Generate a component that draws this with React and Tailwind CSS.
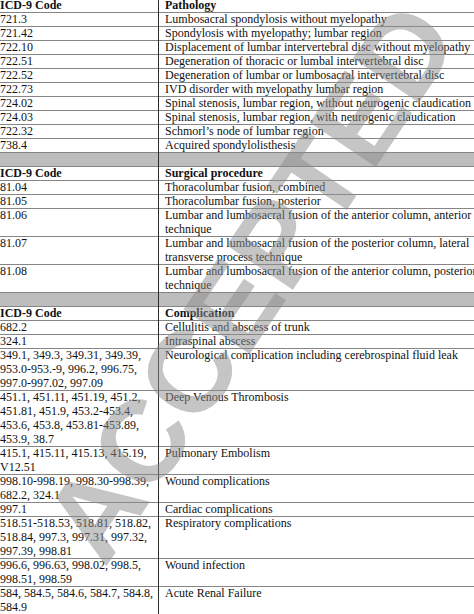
const sections = [
  {
    title: 'Pathology',
    rows: [
      [['721.3'], ['Lumbosacral spondylosis without myelopathy']],
      [['721.42'], ['Spondylosis with myelopathy; lumbar region']],
      [['722.10'], ['Displacement of lumbar intervertebral disc without myelopathy']],
      [['722.51'], ['Degeneration of thoracic or lumbal intervertebral disc']],
      [['722.52'], ['Degeneration of lumbar or lumbosacral intervertebral disc']],
      [['722.73'], ['IVD disorder with myelopathy lumbar region']],
      [['724.02'], ['Spinal stenosis, lumbar region, without neurogenic claudication']],
      [['724.03'], ['Spinal stenosis, lumbar region, with neurogenic claudication']],
      [['722.32'], ['Schmorl\u2019s node of lumbar region']],
      [['738.4'], ['Acquired spondylolisthesis']],
    ],
  },
  {
    title: 'Surgical procedure',
    rows: [
      [['81.04'], ['Thoracolumbar fusion, combined']],
      [['81.05'], ['Thoracolumbar fusion, posterior']],
      [['81.06'], ['Lumbar and lumbosacral fusion of the anterior column, anterior', 'technique']],
      [['81.07'], ['Lumbar and lumbosacral fusion of the posterior column, lateral', 'transverse process technique']],
      [['81.08'], ['Lumbar and lumbosacral fusion of the anterior column, posterior', 'technique']],
    ],
  },
  {
    title: 'Complication',
    rows: [
      [['682.2'], ['Cellulitis and abscess of trunk']],
      [['324.1'], ['Intraspinal abscess']],
      [
        ['349.1, 349.3, 349.31, 349.39,', '953.0-953.-9, 996.2, 996.75,', '997.0-997.02, 997.09'],
        ['Neurological complication including cerebrospinal fluid leak'],
      ],
      [
        ['451.1, 451.11, 451.19, 451.2,', '451.81, 451.9, 453.2-453.4,', '453.6, 453.8, 453.81-453.89,', '453.9, 38.7'],
        ['Deep Venous Thrombosis'],
      ],
      [['415.1, 415.11, 415.13, 415.19,', 'V12.51'], ['Pulmonary Embolism']],
      [['998.10-998.19, 998.30-998.39,', '682.2, 324.1'], ['Wound complications']],
      [['997.1'], ['Cardiac complications']],
      [
        ['518.51-518.53, 518.81, 518.82,', '518.84, 997.3, 997.31, 997.32,', '997.39, 998.81'],
        ['Respiratory complications'],
      ],
      [['996.6, 996.63, 998.02, 998.5,', '998.51, 998.59'], ['Wound infection']],
      [['584, 584.5, 584.6, 584.7, 584.8,', '584.9'], ['Acute Renal Failure']],
    ],
  },
];

function Row({ left, right, bold = false, band = false }) {
  return (
    <div
      className={`flex shadow-[inset_0_1px_0_#858585] ${band ? 'bg-[#bdbdbd] h-[14px]' : ''} ${bold ? 'font-bold' : ''}`}
    >
      <div className="w-[159px] shrink-0 border-r border-[#2b2b2b]">
        {left.map((line) => (
          <div key={line} className="whitespace-nowrap">{line}</div>
        ))}
      </div>
      <div className="pl-[6px]">
        {right.map((line) => (
          <div key={line} className="whitespace-nowrap">{line}</div>
        ))}
      </div>
    </div>
  );
}

export default function App() {
  return (
    <div className="relative w-[474px] h-[614px] overflow-hidden bg-white text-[#111] font-['Liberation_Serif',serif] text-[12px] leading-[14px]">
      <div className="-mt-[2px]">
        {sections.map((s, i) => (
          <div key={s.title}>
            {i > 0 && <Row left={[]} right={[]} band />}
            <Row left={['ICD-9 Code']} right={[s.title]} bold />
            {s.rows.map(([l, r]) => (
              <Row key={l[0] + r[0]} left={l} right={r} />
            ))}
          </div>
        ))}
      </div>

      {/* watermark */}
      <div className="pointer-events-none absolute inset-0">
        <span className="absolute left-[250px] top-[282px] -translate-x-1/2 -translate-y-1/2 rotate-[-56deg] whitespace-nowrap font-['Liberation_Sans',sans-serif] font-bold text-[116px] leading-none text-[rgba(140,140,140,0.5)]">
          ACCEPTED
        </span>
      </div>
    </div>
  );
}
